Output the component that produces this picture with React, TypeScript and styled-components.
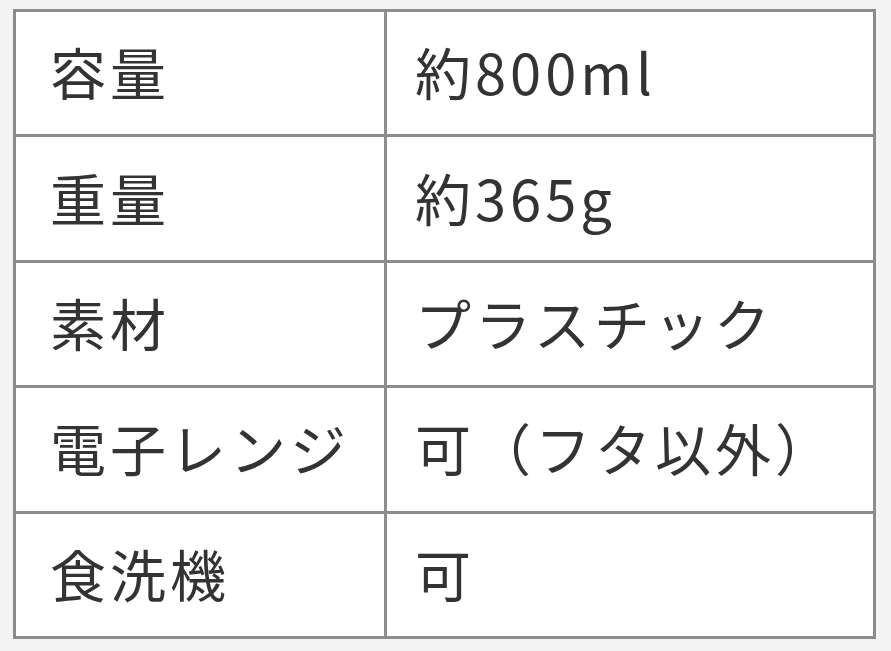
import styled, { createGlobalStyle } from "styled-components";

const GlobalStyle = createGlobalStyle`
  html, body {
    margin: 0;
    background: #f4f4f4;
  }
  body {
    font-family: "Noto Sans CJK JP", "Noto Sans", sans-serif;
    color: #333;
  }
`;

const Page = styled.div`
  padding: 9px 15px 0 13px;
`;

const SpecTable = styled.table`
  width: 863px;
  border-collapse: collapse;
  table-layout: fixed;
  background: #fff;
  border: 3px solid #8c8c8c;
`;

const Row = styled.tr`
  height: 125.4px;
`;

const Cell = styled.td<{ $label?: boolean }>`
  box-sizing: border-box;
  width: ${({ $label }) => ($label ? "371px" : "auto")};
  border: 3px solid #8c8c8c;
  padding: 0 0 4px ${({ $label }) => ($label ? "34px" : "28px")};
  font-size: 56px;
  font-weight: 400;
  line-height: 1;
  letter-spacing: 4px;
  vertical-align: middle;
  white-space: nowrap;
`;

const specs: [string, string][] = [
  ["容量", "約800ml"],
  ["重量", "約365g"],
  ["素材", "プラスチック"],
  ["電子レンジ", "可（フタ以外）"],
  ["食洗機", "可"],
];

export default function App() {
  return (
    <>
      <GlobalStyle />
      <Page>
        <SpecTable>
          <tbody>
            {specs.map(([label, value]) => (
              <Row key={label}>
                <Cell $label>{label}</Cell>
                <Cell>{value}</Cell>
              </Row>
            ))}
          </tbody>
        </SpecTable>
      </Page>
    </>
  );
}
